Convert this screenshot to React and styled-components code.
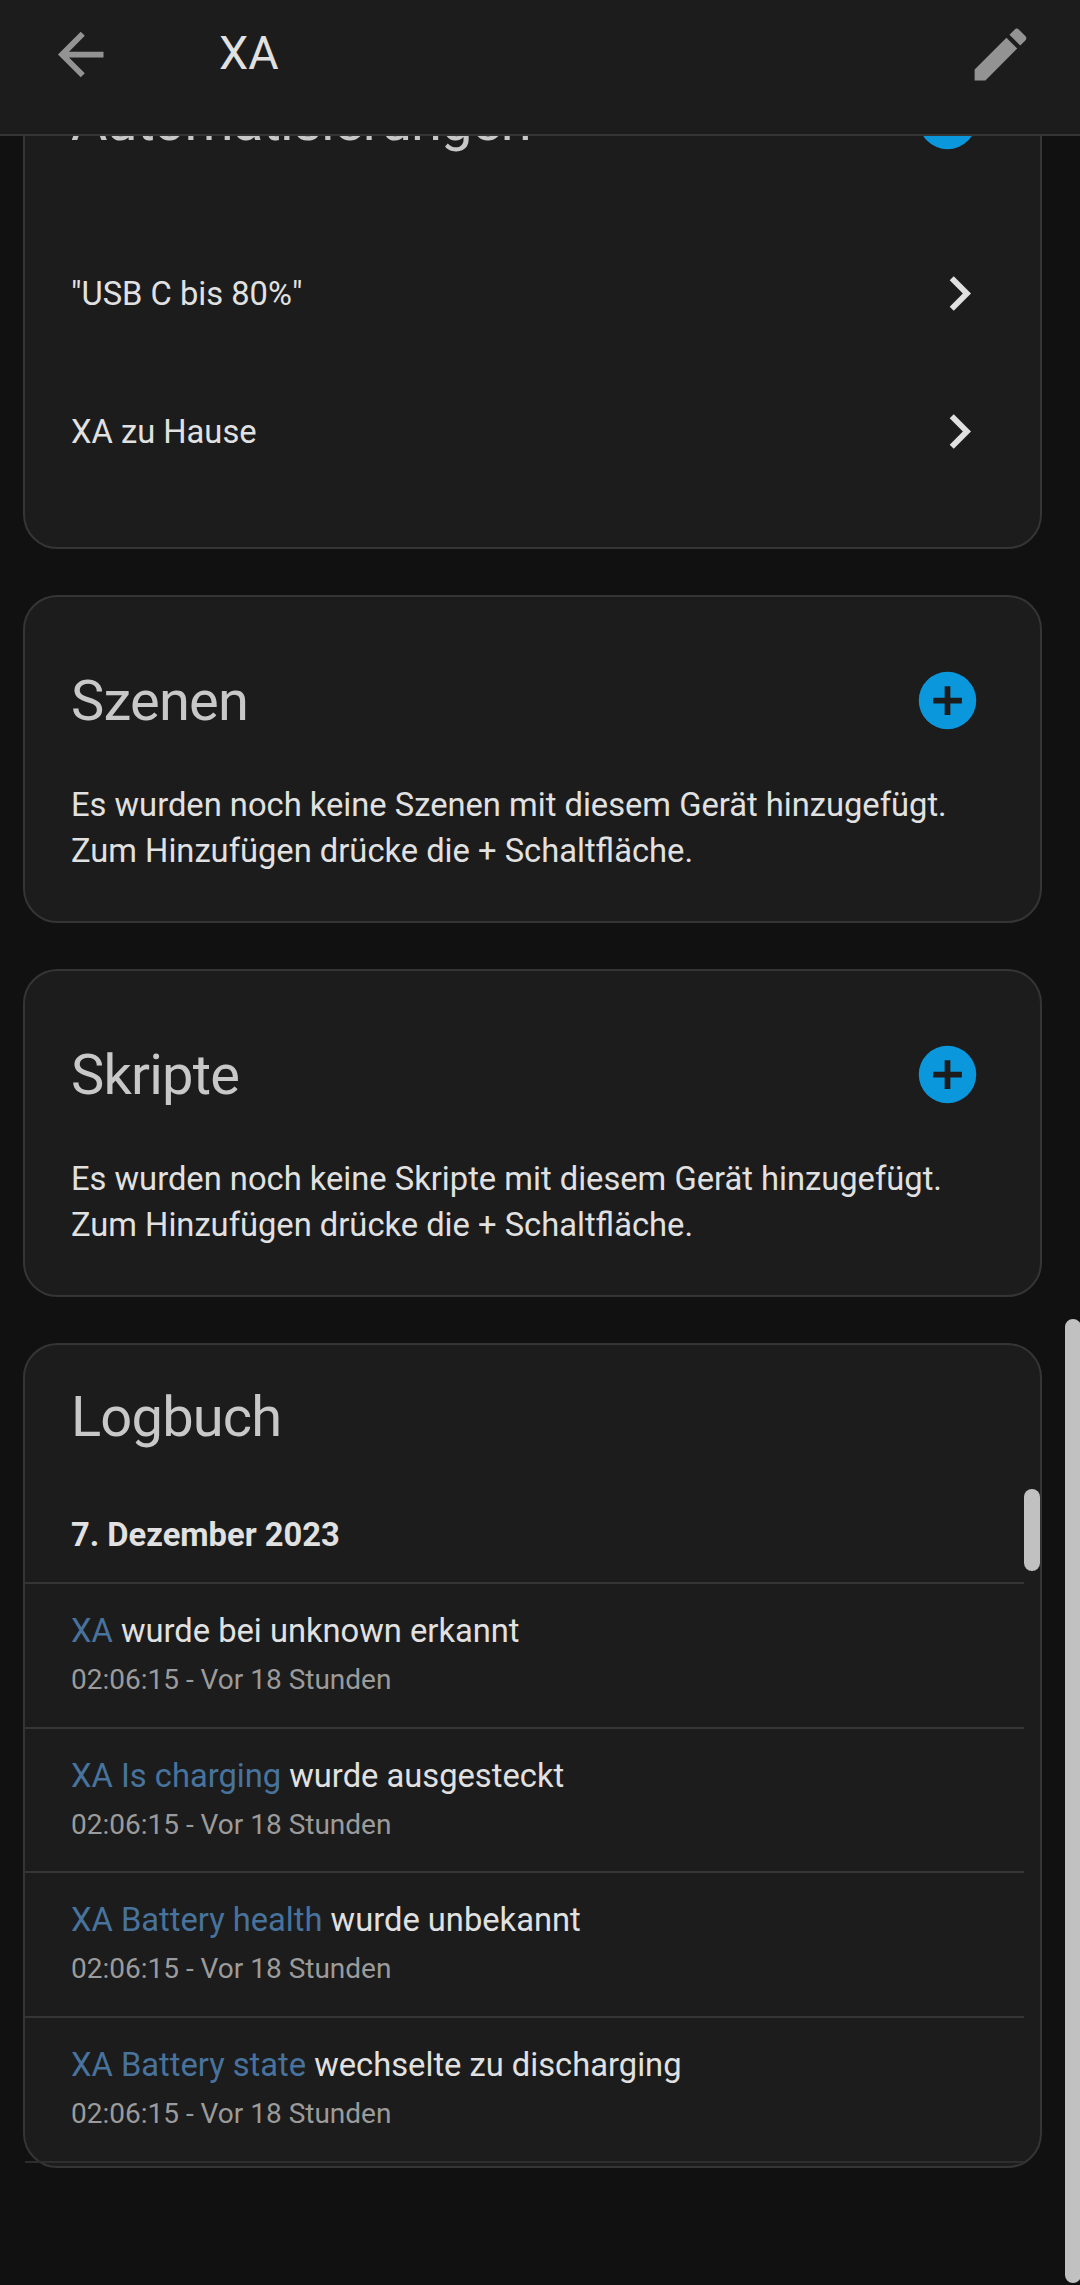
import React from "react";
import styled, { createGlobalStyle } from "styled-components";

const GlobalStyle = createGlobalStyle`
  * {
    box-sizing: border-box;
  }
  body {
    margin: 0;
    background-color: #111111;
    color: #e1e1e1;
    font-family: Roboto, "Noto Sans", sans-serif;
    font-size: 32.7px;
    line-height: 46px;
  }
`;

const Page = styled.div`
  display: flex;
  flex-direction: column;
  height: 2285px;
  position: relative;
  overflow: hidden;
`;

const Toolbar = styled.header`
  display: flex;
  flex: none;
  align-items: center;
  height: 136px;
  padding: 0 45px 25px 46px;
  background-color: #1c1c1c;
  border-bottom: 2px solid #353535;
`;

const Title = styled.div`
  flex: 1;
  margin: -3px 0 0 104px;
  font-size: 46.6px;
`;

const Icon = styled.svg`
  display: block;
  flex: none;
  width: 69px;
  height: 69px;
  fill: ${props => props.color || "#e1e1e1"};
`;

const Content = styled.main`
  flex: 1;
  min-height: 0;
  overflow: hidden;
`;

const Cards = styled.div`
  display: flex;
  flex-direction: column;
  gap: 46px;
  margin-top: -121px;
  padding: 0 38px 0 23px;
`;

const Card = styled.section`
  height: ${props => props.height}px;
  background-color: #1c1c1c;
  border: 2px solid #353535;
  border-radius: 34.5px;
`;

const CardHeader = styled.div`
  display: flex;
  align-items: center;
  justify-content: space-between;
  height: ${props => (props.compact ? 144 : 138)}px;
  margin-top: ${props => (props.compact ? 0 : 34.5)}px;
  padding: 0 58px 0 46px;
  color: #c8c8c8;
  font-size: 56px;
  letter-spacing: -0.8px;
`;

const CardText = styled.div`
  padding: 12px 46px 0;
`;

const Rows = styled.div`
  padding-top: 35px;
`;

const Row = styled.div`
  display: flex;
  align-items: center;
  justify-content: space-between;
  height: 138px;
  padding: 0 46px;
`;

const Log = styled.div`
  position: relative;
`;

const LogDate = styled.div`
  height: 93px;
  padding: 23px 46px;
  font-weight: 700;
`;

const Entry = styled.div`
  height: 144.7px;
  margin-right: 16px;
  padding: 24px 46px 0;
  border-top: 2px solid #353535;
`;

const EntityName = styled.span`
  color: #48739c;
`;

const Time = styled.div`
  margin-top: 6px;
  color: #9b9b9b;
  font-size: 28px;
  line-height: 40px;
`;

const LogEnd = styled.div`
  margin-right: 16px;
  border-top: 2px solid #2e2e2e;
`;

const Thumb = styled.div`
  position: absolute;
  top: ${props => props.top}px;
  right: ${props => props.right || 0}px;
  width: 16px;
  height: ${props => props.height}px;
  background-color: #c1c1c1;
  border-radius: 8px;
`;

const entries = [
  { name: "XA", message: "wurde bei unknown erkannt" },
  { name: "XA Is charging", message: "wurde ausgesteckt" },
  { name: "XA Battery health", message: "wurde unbekannt" },
  { name: "XA Battery state", message: "wechselte zu discharging" }
];

const automations = ['"USB C bis 80%"', "XA zu Hause"];

const AddIcon = () => (
  <Icon viewBox="0 0 24 24" color="#0b97db">
    <path d="M17,13H13V17H11V13H7V11H11V7H13V11H17M12,2A10,10 0 0,0 2,12A10,10 0 0,0 12,22A10,10 0 0,0 22,12A10,10 0 0,0 12,2Z" />
  </Icon>
);

const ChevronIcon = () => (
  <Icon viewBox="0 0 24 24">
    <path d="M8.59,16.58L13.17,12L8.59,7.41L10,6L16,12L10,18L8.59,16.58Z" />
  </Icon>
);

const EmptyCard = ({ title }) => (
  <Card height={328}>
    <CardHeader>
      {title}
      <AddIcon />
    </CardHeader>
    <CardText>
      Es wurden noch keine {title} mit diesem Gerät hinzugefügt.
      <br />
      Zum Hinzufügen drücke die + Schaltfläche.
    </CardText>
  </Card>
);

class App extends React.Component {
  render() {
    return (
      <Page>
        <GlobalStyle />
        <Toolbar>
          <Icon viewBox="0 0 24 24" color="#939393">
            <path d="M20,11V13H8L13.5,18.5L12.08,19.92L4.16,12L12.08,4.08L13.5,5.5L8,11H20Z" />
          </Icon>
          <Title>XA</Title>
          <Icon viewBox="0 0 24 24" color="#939393">
            <path d="M20.71,7.04C21.1,6.65 21.1,6 20.71,5.63L18.37,3.29C18,2.9 17.35,2.9 16.96,3.29L15.12,5.12L18.87,8.87M3,17.25V21H6.75L17.81,9.93L14.06,6.18L3,17.25Z" />
          </Icon>
        </Toolbar>
        <Content>
          <Cards>
            <Card height={534}>
              <CardHeader>
                Automatisierungen
                <AddIcon />
              </CardHeader>
              <Rows>
                {automations.map(name => (
                  <Row key={name}>
                    {name}
                    <ChevronIcon />
                  </Row>
                ))}
              </Rows>
            </Card>
            <EmptyCard title="Szenen" />
            <EmptyCard title="Skripte" />
            <Card height={825}>
              <CardHeader compact>Logbuch</CardHeader>
              <Log>
                <LogDate>7. Dezember 2023</LogDate>
                {entries.map(({ name, message }) => (
                  <Entry key={name}>
                    <EntityName>{name}</EntityName> {message}
                    <Time>02:06:15 - Vor 18 Stunden</Time>
                  </Entry>
                ))}
                <LogEnd />
                <Thumb top={0} height={82} />
              </Log>
            </Card>
          </Cards>
        </Content>
        <Thumb top={1319} right={-1} height={964} />
      </Page>
    );
  }
}

export default App;
